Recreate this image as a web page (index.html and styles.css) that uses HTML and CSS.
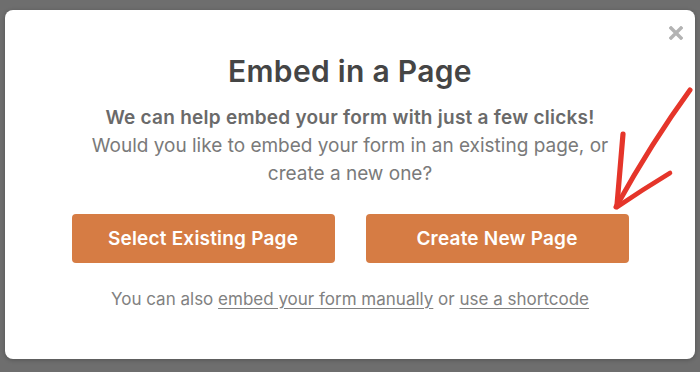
FILE: index.html
```html
<!DOCTYPE html>
<html lang="en">
<head>
<meta charset="utf-8">
<title>Embed in a Page</title>
<link rel="stylesheet" href="styles.css">
</head>
<body>
<div class="backdrop">
  <div class="modal">
    <button class="close" aria-label="Close">
      <svg width="14" height="14" viewBox="0 0 14 14"><path d="M2 2 L12 12 M12 2 L2 12" stroke="#b3b3b3" stroke-width="3.4" stroke-linecap="square"/></svg>
    </button>
    <h1 class="title">Embed in a Page</h1>
    <p class="intro">
      <strong>We can help embed your form with just a few clicks!</strong><br>
      Would you like to embed your form in an existing page, or<br>
      create a new one?
    </p>
    <div class="actions">
      <button class="btn">Select Existing Page</button>
      <button class="btn">Create New Page</button>
    </div>
    <p class="footer">You can also <a href="#">embed your form manually</a> or <a href="#">use a shortcode</a></p>
  </div>
</div>
<svg class="arrow" width="700" height="372" viewBox="0 0 700 372">
  <g fill="none" stroke="#e5352a" stroke-linecap="round" stroke-linejoin="round">
    <path d="M690 90 Q652 142 616 207" stroke-width="5"/>
    <path d="M623 134 Q620 170 617 205" stroke-width="5.2"/>
    <path d="M670 173 Q642 190 617 207" stroke-width="4.6"/>
  </g>
</svg>
</body>
</html>
```
FILE: styles.css
```css
* { box-sizing: border-box; }
html, body { margin: 0; padding: 0; }
body {
  width: 700px;
  height: 372px;
  overflow: hidden;
  background: #6e6e6e;
  font-family: Inter, "Noto Sans", "Liberation Sans", sans-serif;
  position: relative;
}
.backdrop {
  padding: 10px 5px 0 5px;
}
.modal {
  position: relative;
  width: 690px;
  height: 349px;
  background: #ffffff;
  border-radius: 8px;
  box-shadow: 0 1px 4px rgba(0,0,0,0.25);
  padding-top: 43px;
  text-align: center;
}
.close {
  position: absolute;
  top: 16px;
  right: 12px;
  width: 14px;
  height: 14px;
  padding: 0;
  border: 0;
  background: none;
  display: flex;
}
.title {
  margin: 0;
  font-size: 30px;
  line-height: 36px;
  font-weight: 600;
  letter-spacing: 0.3px;
  color: #454545;
}
.intro {
  margin: 15px 0 0;
  font-size: 19px;
  line-height: 28px;
  color: #7a7a7a;
}
.intro strong {
  font-weight: 600;
  letter-spacing: 0.25px;
  color: #6a6a6a;
}
.actions {
  margin-top: 26px;
  display: flex;
  justify-content: center;
  gap: 31px;
}
.btn {
  width: 263px;
  height: 49px;
  border: 0;
  border-radius: 4px;
  background: #d67c44;
  color: #ffffff;
  font-family: inherit;
  font-size: 19px;
  font-weight: 600;
  letter-spacing: 0.2px;
}
.footer {
  margin: 24px 0 0;
  font-size: 17px;
  line-height: 24px;
  color: #818181;
}
.footer a {
  color: #818181;
  text-decoration: underline;
  text-underline-offset: 3px;
}
.arrow {
  position: absolute;
  left: 0;
  top: 0;
  pointer-events: none;
}
```
